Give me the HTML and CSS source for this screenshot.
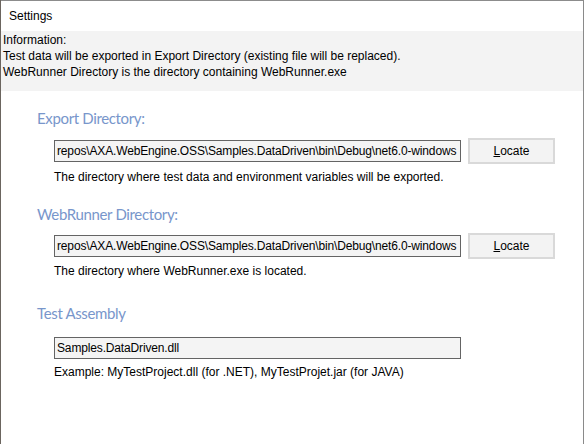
FILE: index.html
```html
<!DOCTYPE html>
<html>
<head>
<meta charset="utf-8">
<link rel="stylesheet" href="styles.css">
</head>
<body>
<div class="window">
  <div class="titlebar">Settings</div>
  <div class="info">
    <div>Information:</div>
    <div>Test data will be exported in Export Directory (existing file will be replaced).</div>
    <div>WebRunner Directory is the directory containing WebRunner.exe</div>
  </div>
  <div class="content">
    <div class="section s1">
      <div class="heading">Export Directory:</div>
      <div class="row">
        <div class="field">repos\AXA.WebEngine.OSS\Samples.DataDriven\bin\Debug\net6.0-windows</div>
        <div class="button"><span class="u">L</span>ocate</div>
      </div>
      <div class="desc">The directory where test data and environment variables will be exported.</div>
    </div>
    <div class="section s2">
      <div class="heading">WebRunner Directory:</div>
      <div class="row">
        <div class="field">repos\AXA.WebEngine.OSS\Samples.DataDriven\bin\Debug\net6.0-windows</div>
        <div class="button"><span class="u">L</span>ocate</div>
      </div>
      <div class="desc">The directory where WebRunner.exe is located.</div>
    </div>
    <div class="section s3">
      <div class="heading">Test Assembly</div>
      <div class="row">
        <div class="field">Samples.DataDriven.dll</div>
      </div>
      <div class="desc">Example: MyTestProject.dll (for .NET), MyTestProjet.jar (for JAVA)</div>
    </div>
  </div>
</div>
</body>
</html>
```
FILE: styles.css
```css
html, body {
  margin: 0;
  padding: 0;
}
body {
  background: #6b655f;
  width: 584px;
  height: 444px;
  overflow: hidden;
  font-family: "Liberation Sans", Arial, sans-serif;
  font-size: 12px;
  color: #000;
}
.window {
  box-sizing: border-box;
  width: 583px;
  height: 444px;
  margin-left: 1px;
  background: #fff;
  border-top: 1px solid #8c8c8c;
  border-right: 1px solid #8a8a8a;
}
.titlebar {
  height: 30px;
  line-height: 30px;
  padding-left: 8px;
  font-size: 12px;
}
.info {
  box-sizing: border-box;
  height: 60px;
  background: #f3f3f3;
  padding: 1px 0 0 2px;
  line-height: 16px;
}
.content {
  padding-left: 36px;
}
.heading {
  font-family: "Lato", "Liberation Sans", sans-serif;
  font-size: 15px;
  font-weight: 400;
  letter-spacing: -0.35px;
  color: #7896cb;
  line-height: 20px;
}
.s1 { padding-top: 17px; }
.s2 { padding-top: 19px; }
.s3 { padding-top: 24px; }
.row {
  display: flex;
  align-items: center;
  padding-left: 17px;
  margin-top: 10px;
  height: 26px;
}
.s2 .row { margin-top: 9px; }
.s3 .row { margin-top: 12px; }
.field {
  box-sizing: border-box;
  width: 407px;
  height: 22px;
  border: 1px solid #646464;
  background: #f4f4f4;
  padding: 0 2px;
  line-height: 20px;
  white-space: nowrap;
  overflow: hidden;
  letter-spacing: -0.15px;
}
.button {
  box-sizing: border-box;
  width: 87px;
  height: 26px;
  margin-left: 7px;
  border: 2px solid #d9d9d9;
  background: #f3f3f3;
  text-align: center;
  line-height: 22px;
}
.u { text-decoration: underline; }
.desc {
  padding-left: 17px;
  margin-top: 5px;
  line-height: 16px;
}
.s2 .desc { margin-top: 4px; }
.s3 .desc { margin-top: 3px; }
```
